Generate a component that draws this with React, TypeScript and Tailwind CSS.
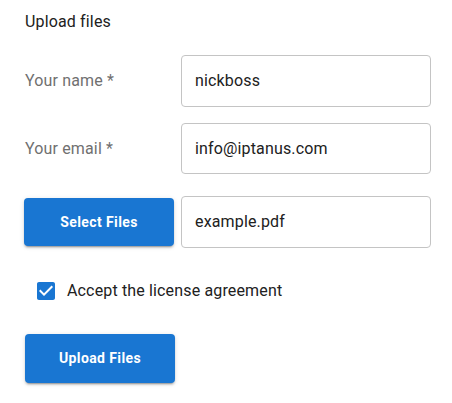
export default function App() {
  const font = { fontFamily: 'Roboto, "Helvetica Neue", Arial, sans-serif' };
  const btn =
    "w-[150px] rounded-[4px] bg-[#1976d2] text-white text-[14px] font-bold tracking-[0.4px] shadow-[0_3px_1px_-2px_rgba(0,0,0,0.2),0_2px_2px_0_rgba(0,0,0,0.14),0_1px_5px_0_rgba(0,0,0,0.12)]";
  return (
    <div className="w-[452px] h-[403px] bg-white pl-[25px] pt-[10px] tracking-[0.15px]" style={font}>
      <div className="text-[16px] leading-[24px] text-[#212121]">Upload files</div>

      <div className="mt-[21px] flex items-center h-[52px]">
        <label className="w-[156px] text-[16px] text-[#707070]">Your name *</label>
        <div className="w-[250px] h-[52px] border border-[#c4c4c4] rounded-[4px] flex items-center px-[13px] text-[16px] text-[#212121]">
          nickboss
        </div>
      </div>

      <div className="mt-[16px] flex items-center h-[51px]">
        <label className="w-[156px] text-[16px] text-[#707070]">Your email *</label>
        <div className="w-[250px] h-[51px] border border-[#c4c4c4] rounded-[4px] flex items-center px-[13px] text-[16px] text-[#212121]">
          info@iptanus.com
        </div>
      </div>

      <div className="mt-[22px] flex items-center h-[52px] -ml-px gap-[7px]">
        <button className={btn + " h-[48px]"}>Select Files</button>
        <div className="w-[250px] h-[52px] border border-[#c4c4c4] rounded-[4px] flex items-center px-[13px] text-[16px] text-[#212121]">
          example.pdf
        </div>
      </div>

      <div className="mt-[31px] flex items-center h-[24px] ml-[9px] gap-[9px]">
        <svg width="24" height="24" viewBox="0 0 24 24" className="shrink-0">
          <path
            fill="#1976d2"
            d="M19 3H5c-1.11 0-2 .9-2 2v14c0 1.1.89 2 2 2h14c1.11 0 2-.9 2-2V5c0-1.1-.89-2-2-2zm-9 14l-5-5 1.41-1.41L10 14.17l7.59-7.59L19 8l-9 9z"
          />
        </svg>
        <span className="text-[16px] leading-[24px] text-[#212121]">Accept the license agreement</span>
      </div>

      <button className={btn + " mt-[31px] h-[49px]"}>Upload Files</button>
    </div>
  );
}
